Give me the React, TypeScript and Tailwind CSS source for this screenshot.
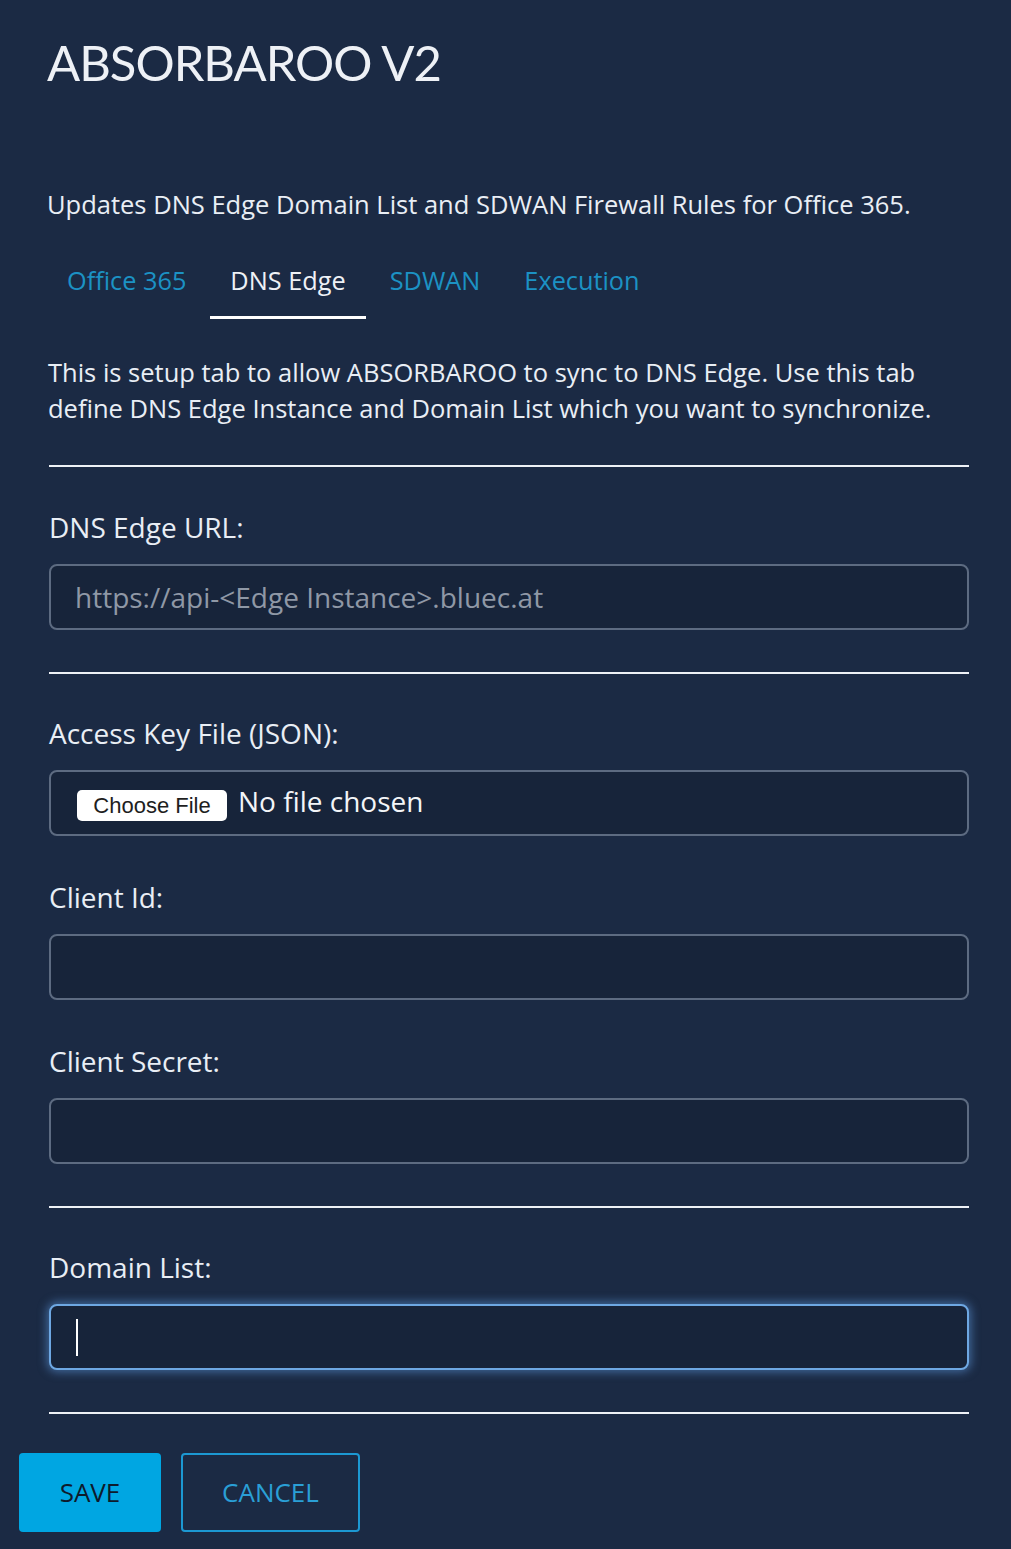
import React from 'react';

const tabs = ['Office 365', 'DNS Edge', 'SDWAN', 'Execution'];

const Divider = ({ className = '' }: { className?: string }) => (
  <div className={`h-[2px] bg-[#eef1f6] ${className}`} />
);

const Label = ({ children, className = '' }: { children: React.ReactNode; className?: string }) => (
  <div className={`text-[28px] leading-[36px] text-[#e9eef5] ${className}`}>{children}</div>
);

const boxBase = 'h-[66px] w-full rounded-[8px] border-2 bg-[#17243a] flex items-center';

const App: React.FC = () => {
  return (
    <div className="min-h-screen bg-[#1b2a44] font-['Open_Sans',sans-serif] text-[#e9eef5] pl-[19px] pb-[17px]">
      {/* Header */}
      <h1 className="pt-[34px] pl-[28px] font-['Lato',sans-serif] text-[49px] leading-[56px] font-normal tracking-[-1px] text-[#eef1f6]">
        ABSORBAROO V2
      </h1>

      <div className="ml-[30px] w-[920px]">
        <p className="mt-[96px] -ml-[2px] text-[25.5px] leading-[36px]">
          Updates DNS Edge Domain List and SDWAN Firewall Rules for Office 365.
        </p>

        {/* Tabs */}
        <div className="mt-[40px] flex gap-[4px] ml-[-2px]">
          {tabs.map((t) => {
            const active = t === 'DNS Edge';
            return (
              <div
                key={t}
                className={`px-[20px] pb-[18px] text-[25.3px] leading-[36px] border-b-[3px] ${
                  active ? 'border-white text-[#eef1f6]' : 'border-transparent text-[#1c92c4]'
                }`}
              >
                {t}
              </div>
            );
          })}
        </div>

        <p className="mt-[35px] -ml-[1px] text-[25.5px] leading-[36px]">
          This is setup tab to allow ABSORBAROO to sync to DNS Edge. Use this tab define DNS Edge Instance and Domain List which you want to synchronize.
        </p>

        <Divider className="mt-[39px]" />

        {/* DNS Edge URL */}
        <Label className="mt-[42px]">DNS Edge URL:</Label>
        <div className={`${boxBase} mt-[19px] border-[#5d6b81] pl-[24px]`}>
          <span className="text-[28px] text-[#8f98a6]">https://api-&lt;Edge Instance&gt;.bluec.at</span>
        </div>

        <Divider className="mt-[42px]" />

        {/* Access key */}
        <Label className="mt-[41px]">Access Key File (JSON):</Label>
        <div className={`${boxBase} mt-[19px] border-[#5d6b81] pl-[26px]`}>
          <span className="h-[31px] w-[150px] rounded-[5px] bg-white text-[#1e1e1e] font-['Liberation_Sans',sans-serif] text-[22px] flex items-center justify-center mt-[4px]">
            Choose File
          </span>
          <span className="ml-[11px] text-[28px] text-[#f3f5f8] mb-[4px]">No file chosen</span>
        </div>

        {/* Client Id */}
        <Label className="mt-[43px]">Client Id:</Label>
        <div className={`${boxBase} mt-[19px] border-[#5d6b81]`} />

        {/* Client Secret */}
        <Label className="mt-[43px]">Client Secret:</Label>
        <div className={`${boxBase} mt-[19px] border-[#5d6b81]`} />

        <Divider className="mt-[42px]" />

        {/* Domain List */}
        <Label className="mt-[41px]">Domain List:</Label>
        <div
          className={`${boxBase} mt-[19px] border-[#6ea8e3] pl-[25px] shadow-[0_0_10px_2px_rgba(96,158,230,0.55)]`}
        >
          <span className="h-[37px] w-[2px] bg-white" />
        </div>

        <Divider className="mt-[42px]" />
      </div>

      {/* Actions */}
      <div className="mt-[39px] flex gap-[20px]">
        <button className="h-[79px] w-[142px] rounded-[4px] bg-[#00a6e2] text-[26px] text-[#0e1a2c]">
          SAVE
        </button>
        <button className="h-[79px] w-[179px] rounded-[4px] border-2 border-[#1c98d2] text-[26px] text-[#2a9fd6]">
          CANCEL
        </button>
      </div>
    </div>
  );
};

export default App;
